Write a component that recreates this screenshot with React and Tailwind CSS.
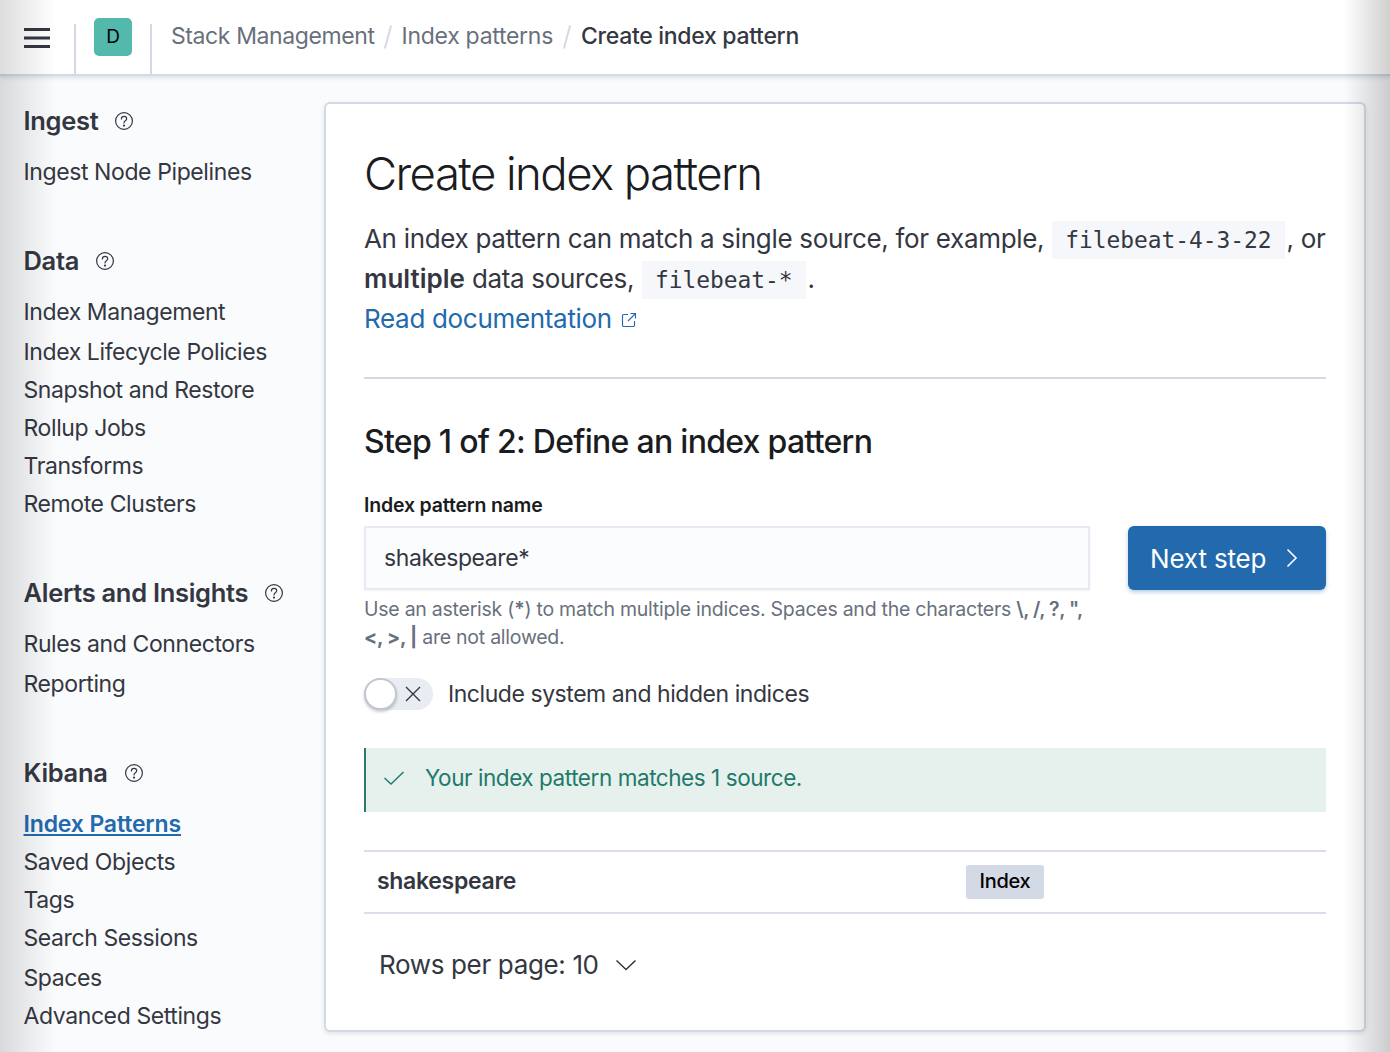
import React from "react";

const Help = () => (
  <svg width="20" height="20" viewBox="0 0 20 20" fill="none" stroke="#343741" strokeWidth="1.2" strokeLinecap="round">
    <circle cx="10" cy="10" r="8.4" />
    <path d="M7.4 8c0-1.6 1.1-2.6 2.7-2.6 1.5 0 2.6.9 2.6 2.3 0 2.2-2.7 2-2.7 4.2" />
    <circle cx="10" cy="14.6" r=".5" fill="#343741" />
  </svg>
);

const Section = ({ title, items, className = "" }) => (
  <div className={className}>
    <div className="flex items-center gap-[16px] h-[36px]">
      <h3 className="text-[25.5px] font-semibold text-[#343741] leading-[36px] tracking-[-0.3px]">{title}</h3>
      <Help />
    </div>
    <ul className="mt-[14px]">
      {items.map((it) => (
        <li
          key={it.t}
          className={`leading-[38px] text-[23px] ${it.mt ? "mt-[2px]" : ""} ${
            it.active ? "font-semibold underline text-[#2369ad] tracking-[-0.15px]" : "text-[#343741] tracking-[-0.4px]"
          }`}
        >
          {it.t}
        </li>
      ))}
    </ul>
  </div>
);

const Code = ({ children }) => (
  <code className="inline bg-[#f5f7fa] px-[13px] py-[5.6px] leading-none text-[22.9px] text-[#343741] [font-family:'DejaVu_Sans_Mono',monospace] tracking-[-0.03px] mx-[8px]">
    {children}
  </code>
);

export default function App() {
  return (
    <div className="relative w-[1390px] h-[1052px] overflow-hidden bg-[#fafbfd] text-[#343741] [font-family:Inter,'Liberation_Sans',sans-serif]">
      <header className="h-[76px] bg-white border-b-2 border-[#d3dae6] shadow-[0_2px_4px_rgba(152,162,179,0.3)] flex items-stretch relative z-10">
        <div className="w-[76px] flex items-center justify-start pl-[24px] border-r-2 border-[#d3dae6] mt-[24px]">
          <svg width="26" height="20" viewBox="0 0 26 20" className="-mt-[23px]" fill="#343741">
            <rect x="0" y="0" width="26" height="3" />
            <rect x="0" y="8.5" width="26" height="3" />
            <rect x="0" y="17" width="26" height="3" />
          </svg>
        </div>
        <div className="w-[76px] flex justify-center border-r-2 border-[#d3dae6] mt-[24px]">
          <div className="w-[38px] h-[38px] -mt-[6px] rounded-[5px] bg-[#54b9ad] text-black flex items-center justify-center text-[19px]">D</div>
        </div>
        <nav className="flex items-center pl-[19px] h-[73px] text-[23px] tracking-[-0.4px]">
          <span className="text-[#69707d]">Stack Management</span>
          <span className="w-[2px] h-[24px] bg-[#d3dae6] rotate-[15deg] mx-[12.5px]" />
          <span className="text-[#69707d] tracking-[-0.28px]">Index patterns</span>
          <span className="w-[2px] h-[24px] bg-[#d3dae6] rotate-[15deg] mx-[13px]" />
          <span className="text-[#343741] font-medium tracking-[-0.3px]">Create index pattern</span>
        </nav>
      </header>

      <div className="flex">
        <aside className="w-[324px] shrink-0 pl-[23.5px] pt-[27px]">
          <Section title="Ingest" items={[{ t: "Ingest Node Pipelines" }]} />
          <Section
            className="mt-[52px]"
            title="Data"
            items={[
              { t: "Index Management" },
              { t: "Index Lifecycle Policies", mt: true },
              { t: "Snapshot and Restore" },
              { t: "Rollup Jobs" },
              { t: "Transforms" },
              { t: "Remote Clusters" },
            ]}
          />
          <Section
            className="mt-[52px]"
            title="Alerts and Insights"
            items={[{ t: "Rules and Connectors" }, { t: "Reporting", mt: true }]}
          />
          <Section
            className="mt-[52px]"
            title="Kibana"
            items={[
              { t: "Index Patterns", active: true },
              { t: "Saved Objects" },
              { t: "Tags" },
              { t: "Search Sessions" },
              { t: "Spaces", mt: true },
              { t: "Advanced Settings" },
            ]}
          />
        </aside>

        <main className="mt-[26px] w-[1042px] h-[930px] bg-white border-2 border-[#d3dae6] rounded-[6px] shadow-[0_2px_4px_rgba(152,162,179,0.25)] px-[38px] pt-[40px]">
          <h1 className="text-[45.5px] leading-[60px] font-light text-[#1a1c21] tracking-[-1.55px]">Create index pattern</h1>
          <div className="mt-[15px] text-[26px] leading-[40px] text-[#343741] tracking-[-0.32px]">
            <p className="whitespace-nowrap">
              An index pattern can match a single source, for example,<Code>filebeat-4-3-22</Code><span className="-ml-[6px]">, or</span>
            </p>
            <p className="whitespace-nowrap">
              <b className="font-semibold tracking-[0px]">multiple</b> data sources,<Code>filebeat-*</Code><span className="-ml-[6px]">.</span>
            </p>
            <p className="flex items-center gap-[9px] text-[#2369ad]">
              Read documentation
              <svg width="16" height="16" viewBox="0 0 16 16" fill="none" stroke="#2369ad" strokeWidth="1.1" className="mt-[1px]">
                <path d="M7 2.5H2.8a1.3 1.3 0 0 0-1.3 1.3v9.4a1.3 1.3 0 0 0 1.3 1.3h9.4a1.3 1.3 0 0 0 1.3-1.3V9" />
                <path d="M9.5 1.5h5v5M14.5 1.5 7 9" />
              </svg>
            </p>
          </div>
          <hr className="mt-[38px] border-0 h-[2px] bg-[#d3dae6]" />
          <h2 className="mt-[40px] text-[32px] leading-[46px] font-medium text-[#1a1c21] tracking-[-0.72px]">Step 1 of 2: Define an index pattern</h2>

          <div className="mt-[24px] flex gap-[38px] items-start">
            <div className="w-[726px]">
              <label className="block text-[19.5px] font-semibold leading-[32px] text-[#1a1c21] tracking-[-0.17px]">Index pattern name</label>
              <div className="mt-[5px] h-[64px] bg-[#fbfcfd] border-2 border-[#e7eaf2] shadow-[0_1px_2px_rgba(0,0,0,0.05)] flex items-center pl-[18px] text-[23px] tracking-[-0.4px] text-[#343741]">shakespeare*</div>
              <p className="mt-[5px] text-[19.5px] leading-[28px] text-[#69707d] whitespace-nowrap tracking-[-0.25px]">
                Use an asterisk (<b className="font-semibold">*</b>) to match multiple indices. Spaces and the characters <b className="font-semibold tracking-[-0.45px]">\, /, ?, ",</b>
                <br />
                <b className="font-bold">&lt;, &gt;, |</b> are not allowed.
              </p>
            </div>
            <button className="mt-[37px] w-[198px] h-[64px] rounded-[6px] bg-[#2369ad] text-white text-[26px] tracking-[-0.15px] shadow-[0_2px_4px_rgba(35,105,173,0.35)] flex items-center pl-[22px] gap-[20px]">
              Next step
              <svg width="12" height="20" viewBox="0 0 12 20" fill="none" stroke="white" strokeWidth="1.6">
                <path d="M1.5 1.5 10 10l-8.5 8.5" />
              </svg>
            </button>
          </div>

          <div className="mt-[26px] flex items-center gap-[15px]">
            <div className="relative w-[69px] h-[32px] rounded-full bg-[#e9edf3]">
              <div className="absolute left-0 top-0 w-[33px] h-[32px] rounded-full bg-white border-2 border-[#c2c7d0] shadow-[0_2px_3px_rgba(0,0,0,0.2)]" />
              <svg width="16" height="16" viewBox="0 0 16 16" className="absolute left-[41px] top-[8px]" stroke="#343741" strokeWidth="1.4" fill="none">
                <path d="M1 1l14 14M15 1 1 15" />
              </svg>
            </div>
            <span className="text-[23px] tracking-[-0.45px]">Include system and hidden indices</span>
          </div>

          <div className="mt-[36px] h-[64px] bg-[#e6f1ee] border-l-2 border-[#2c7a6c] flex items-center pl-[17px] pb-[4px] gap-[20px] text-[#1f7a6a] text-[22.5px] tracking-[-0.44px]">
            <svg width="22" height="16" viewBox="0 0 22 16" fill="none" stroke="#1f7a6a" strokeWidth="1.4">
              <path d="M1.5 8 8 14 20.5 2" />
            </svg>
            Your index pattern matches 1 source.
          </div>

          <div className="mt-[38px] h-[64px] border-y-2 border-[#d9deea] flex items-center">
            <div className="w-[602px] pl-[13px] text-[23px] tracking-[-0.3px] font-semibold">shakespeare</div>
            <span className="h-[34px] w-[78px] rounded-[3px] bg-[#d3dae6] text-black text-[20px] tracking-[-0.3px] font-medium flex items-center justify-center pb-[2px]">Index</span>
          </div>

          <div className="mt-[28px] pl-[15px] flex items-center gap-[16px] text-[26px] tracking-[-0.35px] leading-[46px]">
            Rows per page: 10
            <svg width="22" height="12" viewBox="0 0 22 12" fill="none" stroke="#343741" strokeWidth="1.5">
              <path d="M1.5 1.5 11 10.5l9.5-9" />
            </svg>
          </div>
        </main>
      </div>

      <div className="pointer-events-none absolute z-20 left-0 top-0 bottom-0 w-[56px] bg-gradient-to-r from-[#00000022] to-transparent" />
      <div className="pointer-events-none absolute z-20 right-0 top-0 bottom-0 w-[46px] bg-gradient-to-l from-[#00000030] to-transparent" />
    </div>
  );
}
